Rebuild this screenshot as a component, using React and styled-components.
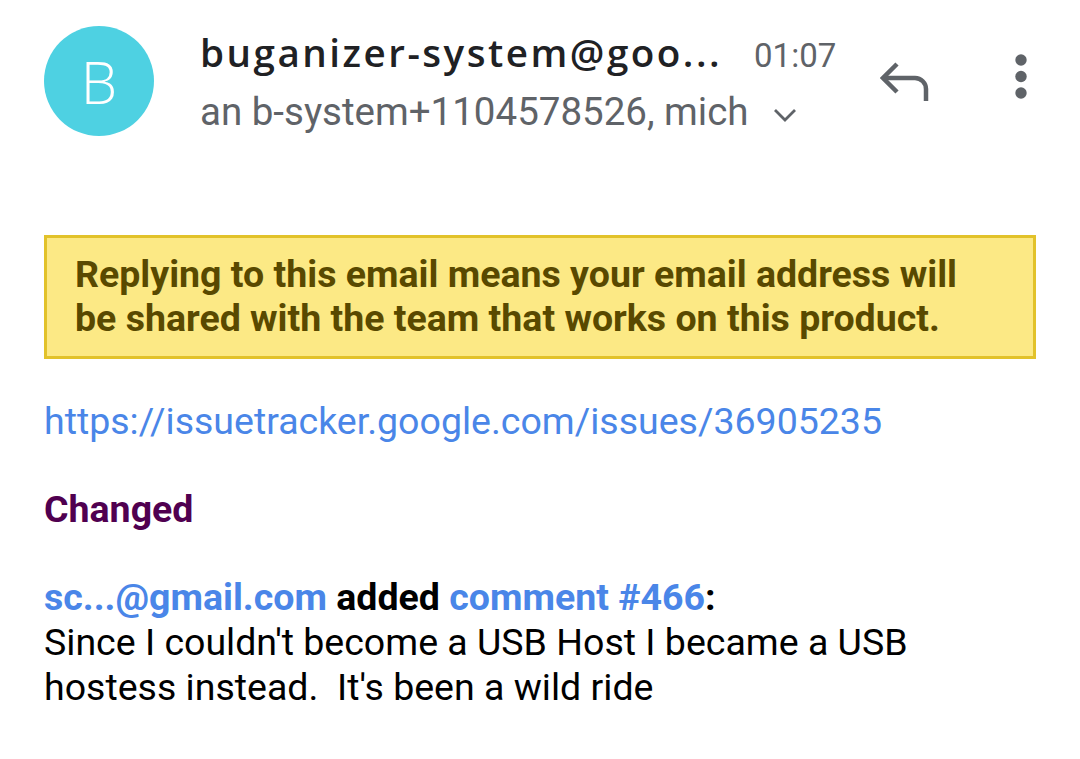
import React from 'react';
import styled, { createGlobalStyle } from 'styled-components';

const GlobalStyle = createGlobalStyle`
  html, body { margin: 0; padding: 0; background: #fff; }
  body { font-family: Roboto, "Liberation Sans", sans-serif; }
`;

const Page = styled.div`
  width: 1080px;
  height: 759px;
  overflow: hidden;
  padding: 26px 44px 0 44px;
  box-sizing: border-box;
`;

const Header = styled.header`
  display: flex;
  align-items: flex-start;
`;

const Avatar = styled.div`
  flex: 0 0 110px;
  width: 110px;
  height: 110px;
  border-radius: 50%;
  background: #4ed1e2;
  color: #fff;
  display: flex;
  align-items: center;
  justify-content: center;
  font-family: "Open Sans", Roboto, sans-serif;
  font-size: 58px;
  font-weight: 300;
`;

const HeadText = styled.div`
  margin-left: 46px;
  display: flex;
  flex-direction: column;
  width: 660px;
`;

const TopLine = styled.div`
  display: flex;
  align-items: baseline;
  height: 60px;
  white-space: nowrap;
`;

const Sender = styled.span`
  font-family: "Open Sans", Roboto, sans-serif;
  font-size: 38.6px;
  font-weight: 600;
  color: #202124;
  letter-spacing: 2.5px;
`;

const Time = styled.span`
  margin-left: 32px;
  font-size: 33px;
  color: #5f6368;
`;

const Recipients = styled.div`
  display: flex;
  align-items: center;
  font-size: 38.5px;
  color: #5f6368;
  height: 50px;
  white-space: nowrap;
`;

const Chevron = styled.svg`
  margin-left: 24px;
  margin-top: 8px;
`;

const Actions = styled.div`
  margin-left: auto;
  display: flex;
  align-items: flex-start;
  gap: 82px;
  padding-top: 34px;
  margin-right: 8px;
`;

const IconButton = styled.div`
  display: flex;
  align-items: center;
  justify-content: center;
  margin-top: ${p => p.$top || 0}px;
`;

const Banner = styled.div`
  margin-top: 99px;
  border: 3px solid #e2c22a;
  background: #fce985;
  padding: 14px 28px 16px 28px;
  color: #594900;
  font-size: 37.5px;
  font-weight: 700;
  line-height: 44px;
  white-space: nowrap;
`;

const Body = styled.div`
  margin-top: 40px;
  font-size: 37.5px;
  line-height: 45px;
  color: #000;
  white-space: nowrap;
`;

const Para = styled.div`
  margin-bottom: ${p => p.$gap || 0}px;
`;

const Link = styled.span`
  color: #4a86e8;
  font-weight: ${p => (p.$bold ? 700 : 400)};
`;

const Changed = styled.span`
  color: #500050;
  font-weight: 700;
`;

const Strong = styled.span`
  font-weight: 700;
`;

export default function App() {
  return (
    <>
      <GlobalStyle />
      <Page>
        <Header>
          <Avatar>B</Avatar>
          <HeadText>
            <TopLine>
              <Sender>buganizer-system@goo...</Sender>
              <Time>01:07</Time>
            </TopLine>
            <Recipients>
              an b-system+1104578526, mich
              <Chevron width="24" height="14" viewBox="0 0 24 14">
                <path d="M2 2l10 10 10-10" fill="none" stroke="#5f6368" strokeWidth="2.8" />
              </Chevron>
            </Recipients>
          </HeadText>
          <Actions>
            <IconButton>
              <svg width="52" height="42" viewBox="0 0 52 42">
                <path d="M17 4L3 18l14 14" fill="none" stroke="#5f6368" strokeWidth="4.5" />
                <path d="M4 18h31a11 11 0 0 1 11 11v12" fill="none" stroke="#5f6368" strokeWidth="4.5" />
              </svg>
            </IconButton>
            <IconButton $top={-6}>
              <svg width="14" height="46" viewBox="0 0 14 46">
                <circle cx="7" cy="6" r="5.7" fill="#5f6368" />
                <circle cx="7" cy="22.5" r="5.7" fill="#5f6368" />
                <circle cx="7" cy="39" r="5.7" fill="#5f6368" />
              </svg>
            </IconButton>
          </Actions>
        </Header>

        <Banner>
          Replying to this email means your email address will
          <br />
          be shared with the team that works on this product.
        </Banner>

        <Body>
          <Para $gap={43}>
            <Link>https://issuetracker.google.com/issues/36905235</Link>
          </Para>
          <Para $gap={43}>
            <Changed>Changed</Changed>
          </Para>
          <Para>
            <Link $bold>sc...@gmail.com</Link> <Strong>added</Strong>{' '}
            <Link $bold>comment #466</Link>
            <Strong>:</Strong>
          </Para>
          <Para>Since I couldn't become a USB Host I became a USB</Para>
          <Para>hostess instead.&nbsp; It's been a wild ride</Para>
        </Body>
      </Page>
    </>
  );
}
